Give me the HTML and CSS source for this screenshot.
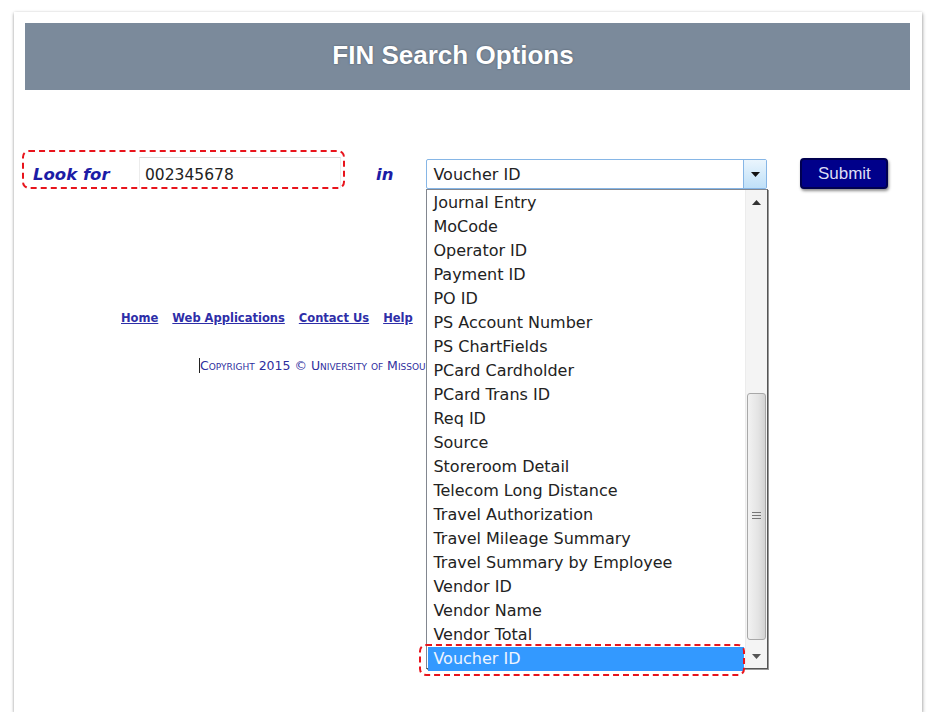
FILE: index.html
```html
<!DOCTYPE html>
<html>
	<head>
		<meta charset="utf-8">
		<title>FIN Search Options</title>
		<link rel="stylesheet" href="styles.css">
	</head>
	<body>
		<div class="card">
			<div class="header">FIN Search Options</div>
			<div class="search">
				<div class="lookbox">
					<span class="lbl">Look for</span>
					<div class="field">002345678</div>
				</div>
				<span class="lbl in">in</span>
				<div class="selectwrap">
					<div class="select">
						<span class="seltext">Voucher ID</span>
						<span class="selbtn"><svg width="9" height="5" viewBox="0 0 9 5"><path d="M0 0H9L4.5 5Z" fill="#111"/></svg></span>
					</div>
					<div class="droplist">
						<ul class="options">
							<li>Journal Entry</li>
							<li>MoCode</li>
							<li>Operator ID</li>
							<li>Payment ID</li>
							<li>PO ID</li>
							<li>PS Account Number</li>
							<li>PS ChartFields</li>
							<li>PCard Cardholder</li>
							<li>PCard Trans ID</li>
							<li>Req ID</li>
							<li>Source</li>
							<li>Storeroom Detail</li>
							<li>Telecom Long Distance</li>
							<li>Travel Authorization</li>
							<li>Travel Mileage Summary</li>
							<li>Travel Summary by Employee</li>
							<li>Vendor ID</li>
							<li>Vendor Name</li>
							<li>Vendor Total</li>
							<li class="sel">Voucher ID</li>
						</ul>
						<div class="scrollbar">
							<svg class="arr up" width="9" height="5" viewBox="0 0 9 5"><path d="M0 5H9L4.5 0Z" fill="#333"/></svg>
							<div class="thumb">
								<svg class="grip" width="9" height="7" viewBox="0 0 9 7"><path d="M0 .5H9M0 3.5H9M0 6.5H9" stroke="#777" stroke-width="1"/></svg>
							</div>
							<svg class="arr down" width="9" height="5" viewBox="0 0 9 5"><path d="M0 0H9L4.5 5Z" fill="#555"/></svg>
						</div>
						<div class="mark"></div>
					</div>
				</div>
				<button type="button" class="submit">Submit</button>
			</div>
			<div class="links">
				<a href="#">Home</a>
				<a href="#">Web Applications</a>
				<a href="#">Contact Us</a>
				<a href="#">Help</a>
				<a href="#">Site</a>
			</div>
			<div class="copy"><span class="caret"></span>Copyright 2015 &copy; University of Missouri System</div>
		</div>
	</body>
</html>
```

FILE: styles.css
```css
body{
	margin: 0;
	background: #fff;
	font-family: "DejaVu Sans", Verdana, sans-serif;
}
.card {
	width: 908px;
	height: 689px;
	margin: 12px 0 0 14px;
	padding-top: 11px;
	background: #fff;
	box-shadow: 0 1px 3px rgba(0,0,0,.35), 1px 2px 4px rgba(0,0,0,.15);
}
.header {
	height: 67px;
	margin: 0 12px 0 11px;
	padding-right: 29px;
	background-color: #7b8a9b;
	color: #fff;
	font: bold 26px/65px "Liberation Sans", Arial, sans-serif;
	text-align: center;
	text-shadow: 0 0 2px rgba(40,50,60,.6);
}
.search {
	display: flex;
	align-items: flex-start;
	margin-top: 60px;
	margin-left: 8px;
	height: 37px;
}
.lookbox {
	display: flex;
	align-items: flex-start;
	width: 308px;
	height: 30px;
	padding: 5px 2px 0 9px;
	border: 2px dashed #e8141c;
	border-radius: 7px;
}
.lbl {
	color: #1c1ca6;
	font-weight: bold;
	font-style: italic;
	font-size: 16.5px;
	line-height: 36px;
	width: 106px;
}
.field {
	width: 195px;
	height: 30px;
	padding-left: 5px;
	border-top: 1px solid #d8d8d8;
	border-left: 1px solid #ececec;
	border-right: 1px solid #ececec;
	font-size: 15.5px;
	line-height: 35px;
	color: #222;
}
.lbl.in {
	width: auto;
	margin-left: 31px;
	margin-top: 7px;
}
.selectwrap {
	position: relative;
	margin-left: 33px;
	margin-top: 9px;
}
.select {
	display: flex;
	width: 339px;
	height: 28px;
	border: 1px solid #86b6e6;
	border-radius: 2px;
	background: #fff;
}
.seltext {
	flex: 1;
	padding-left: 6px;
	font-size: 16px;
	line-height: 30px;
	color: #222;
}
.selbtn {
	width: 22px;
	display: flex;
	align-items: center;
	justify-content: center;
	border-left: 1px solid #86b6e6;
	background: linear-gradient(#eaf5fd, #bfe0f8);
}
.droplist {
	position: absolute;
	top: 30px;
	left: 0;
	width: 340px;
	height: 478px;
	border: 1px solid #828790;
	border-right-color: #555;
	border-bottom-color: #555;
	box-shadow: 1px 1px 0 #999;
	background: #fff;
	z-index: 10;
}
.options {
	list-style: none;
	margin: 0;
	padding: 1px 0 0 1px;
	width: 316px;
}
.options li {
	height: 24px;
	line-height: 24px;
	padding-left: 5px;
	font-size: 16px;
	color: #222;
	white-space: nowrap;
}
.options li.sel {
	background-color: #3399ff;
	color: #eef4ff;
}
.scrollbar {
	position: absolute;
	top: 0;
	right: 0;
	width: 21px;
	height: 100%;
	background: #f4f4f4;
	border-left: 1px solid #ececec;
}
.arr {
	position: absolute;
	left: 6px;
}
.arr.up {
	top: 10px;
}
.arr.down {
	bottom: 9px;
}
.thumb {
	position: absolute;
	left: 1px;
	top: 203px;
	width: 17px;
	height: 245px;
	border: 1px solid #a8a8a8;
	border-radius: 3px;
	background: linear-gradient(to right, #f2f2f2, #e4e4e4 60%, #d2d2d2);
}
.grip {
	position: absolute;
	left: 4px;
	top: 118px;
}
.mark {
	position: absolute;
	left: -8px;
	top: 454px;
	width: 322px;
	height: 28px;
	border: 2px dashed #e8141c;
	border-radius: 7px;
}
.submit {
	margin-left: 33px;
	margin-top: 8px;
	width: 88px;
	height: 31px;
	padding-top: 2px;
	background-color: #00008a;
	border: 2px solid #000050;
	border-radius: 4px;
	color: #dcdcf4;
	font: 17px "Liberation Sans", Arial, sans-serif;
	box-shadow: 1px 2px 3px rgba(0,0,0,.45);
}
.links {
	display: flex;
	gap: 14px;
	width: 306px;
	overflow: hidden;
	margin-top: 124px;
	margin-left: 107px;
	font-size: 11.5px;
	font-weight: bold;
	line-height: 15px;
}
.links a {
	color: #2e2ea8;
	flex-shrink: 0;
}
.copy {
	width: 228px;
	overflow: hidden;
	margin-top: 32px;
	margin-left: 185px;
	font-size: 12.5px;
	font-variant: small-caps;
	color: #2e2e9e;
	white-space: nowrap;
}
.caret {
	display: inline-block;
	width: 1px;
	height: 15px;
	background: #222;
	vertical-align: -3px;
}
```
